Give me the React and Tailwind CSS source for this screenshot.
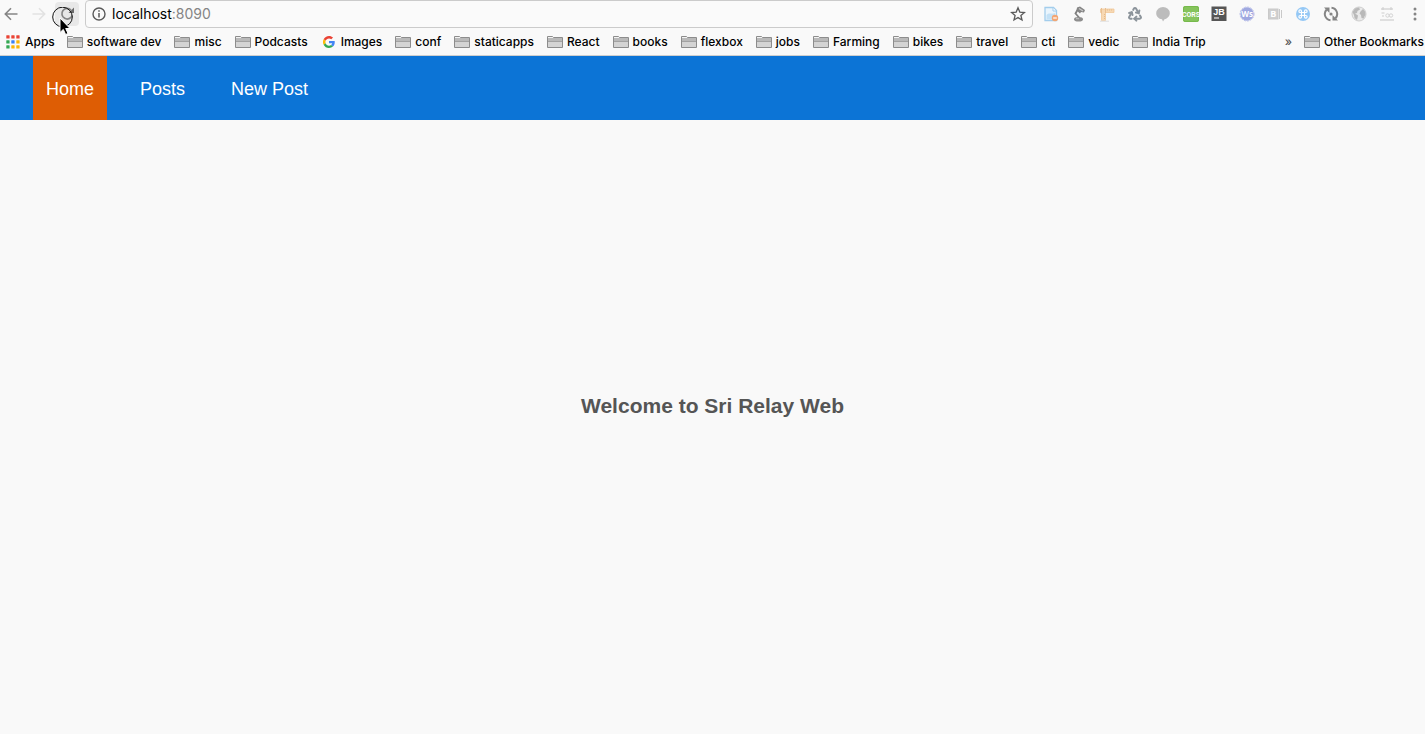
import React from "react";
import { Recycle } from "lucide-react";

const bookmarks = [
  "software dev", "misc", "Podcasts", "Images", "conf", "staticapps", "React", "books",
  "flexbox", "jobs", "Farming", "bikes", "travel", "cti", "vedic", "India Trip",
];

function Folder() {
  return (
    <svg width="16" height="14" viewBox="0 0 16 14" className="shrink-0" aria-hidden="true">
      <path d="M.5 12.500V1.500H5.500L6.500 2.500h9v10z" fill="#d4d4d4" stroke="#8c8c8c" />
      <path d="M1 3h14v3H1z" fill="#b9b9b9" />
      <path d="M1 2.500h5" stroke="#f2f2f2" />
      <path d="M1 6.500h14" stroke="#a2a2a2" />
    </svg>
  );
}

function GoogleG() {
  return (
    <svg width="12" height="12" viewBox="0 0 48 48" className="mx-0.5 shrink-0" aria-hidden="true">
      <path fill="#ea4335" d="M24 9.500c3.500 0 6.700 1.200 9.200 3.600l6.900-6.900C35.900 2.400 30.500 0 24 0 14.600 0 6.500 5.400 2.600 13.200l8 6.200C12.400 13.700 17.700 9.500 24 9.500z" />
      <path fill="#4285f4" d="M47 24.600c0-1.600-.2-3.100-.4-4.600H24v9h12.900c-.6 3-2.200 5.500-4.700 7.200l7.700 6C44.400 38 47 31.800 47 24.600z" />
      <path fill="#fbbc05" d="M10.500 28.600a14.500 14.500 0 0 1 0-9.200l-8-6.200a24 24 0 0 0 0 21.600z" />
      <path fill="#34a853" d="M24 48c6.500 0 11.900-2.100 15.900-5.800l-7.700-6c-2.200 1.500-4.900 2.300-8.200 2.300-6.300 0-11.600-4.200-13.500-9.900l-8 6.200C6.500 42.600 14.600 48 24 48z" />
    </svg>
  );
}

function AppsIcon() {
  const colors = ["#ea4335", "#ea4335", "#ea4335", "#34a853", "#3b82f4", "#fbb505", "#34a853", "#fbb505", "#fbb505"];
  return (
    <svg width="14" height="14" viewBox="0 0 14 14" aria-hidden="true">
      {colors.map((c, i) => (
        <rect key={i} x={(i % 3) * 5 + 0.3} y={Math.floor(i / 3) * 5 + 0.3} width="3.300" height="3.300" rx=".4" fill={c} />
      ))}
    </svg>
  );
}

const extensions = [
  ["Page blocker", (
    <>
      <path d="M2 1.500h8.500l3 3v10H2z" fill="#eaf5fd" stroke="#a3cdec" strokeWidth="1.300" />
      <path d="M3.500 9c3-3 5 0 8.500-2v6.500H3.500z" fill="#c3e1f6" />
      <path d="M10 2v3h3" fill="#fff" stroke="#a3cdec" />
      <circle cx="12" cy="12" r="3.200" fill="#f3a673" />
      <path d="M10.200 12h3.600" stroke="#fff" strokeWidth="1.200" />
    </>
  )],
  ["Lamp", (
    <>
      <path d="M6 1.500L9 .5l5 3.500-1 2.500-3-.5-1 1.500-3.500-3z" fill="#858585" />
      <path d="M8 2.500l4 2.500" stroke="#c9c9c9" strokeWidth="1.300" />
      <path d="M6.500 4L4.500 7.500 8.500 12" fill="none" stroke="#808080" strokeWidth="1.800" />
      <ellipse cx="7.500" cy="13.200" rx="4.500" ry="2.300" fill="#8e8e8e" />
      <path d="M5 12.700h3" stroke="#c4c4c4" />
    </>
  )],
  ["Ruler", (
    <>
      <path d="M1.500 3h13.500v3.500H6.500v8h-4v-8h-1z" fill="#f7d8b3" stroke="#f0c899" strokeWidth=".8" />
      <path d="M8 4h6M5.500 8v5" stroke="#e5bb8b" strokeDasharray="1 1" />
      <path d="M2.500 2v5.500M6.500 2v5" stroke="#e8bf91" />
      <path d="M1 15.200h9" stroke="#dedede" />
    </>
  )],
  ["Recycle", <Recycle size={16} color="#8c949b" strokeWidth={3} />],
  ["Comment", <path d="M8 1a6.800 6.200 0 0 1 6.800 6.200c0 3-2.400 5.300-5.300 6L8 15.500l-1-2.200C3.700 12.800 1.200 10.500 1.200 7.200A6.800 6.200 0 0 1 8 1z" fill="#bcbcbc" />],
  ["CORS", (
    <>
      <rect width="16" height="16" rx="2" fill="#86c45c" />
      <rect x=".5" y=".5" width="15" height="15" rx="2" fill="none" stroke="#76b94c" />
      <text x="8" y="10.500" textAnchor="middle" fontSize="7" fontWeight="700" fill="#fff" fontFamily="Liberation Sans Narrow, Roboto, sans-serif">CORS</text>
    </>
  )],
  ["JetBrains", (
    <>
      <rect x=".5" y=".5" width="15" height="14.500" fill="#565656" />
      <text x="8" y="9" textAnchor="middle" fontSize="9" fontWeight="700" fill="#fff" fontFamily="Liberation Sans, sans-serif">JB</text>
      <path d="M3 12h5" stroke="#ddd" strokeWidth="1.300" />
    </>
  )],
  ["WebSocket", (
    <>
      <circle cx="8" cy="8" r="6.700" fill="#9fa8e0" />
      <circle cx="8" cy="8" r="7" fill="none" stroke="#b9bfe9" strokeDasharray="2 1" />
      <text x="8" y="11" textAnchor="middle" fontSize="8" fontWeight="700" fill="#fff">Ws</text>
    </>
  )],
  ["Blocks", (
    <>
      <rect x="1.500" y="3" width="9.500" height="10" fill="#cfcfcf" stroke="#c9c9c9" />
      <text x="6.300" y="11.200" textAnchor="middle" fontSize="9" fontWeight="700" fill="#fff">B</text>
      <path d="M12.500 3v10M14.500 4v8" stroke="#c9c9c9" />
    </>
  )],
  ["Command", (
    <>
      <circle cx="8" cy="8" r="7" fill="#95c8f5" />
      <path d="M6.500 6.500V5.200a1.300 1.300 0 1 0-1.300 1.300h5.600a1.300 1.300 0 1 0-1.300-1.300v5.600a1.300 1.300 0 1 0 1.300-1.300H5.200a1.300 1.300 0 1 0 1.300 1.300z" fill="none" stroke="#fff" strokeWidth="1.200" />
    </>
  )],
  ["Refresh rule", (
    <>
      <path d="M7.500 14.200A6.200 6.200 0 0 1 3.500 3.800M8.500 1.800A6.200 6.200 0 0 1 12.500 12.200" fill="none" stroke="#858585" strokeWidth="2" />
      <path d="M1 1.500h5.500V7zM15 14.500H9.500V9z" fill="#858585" />
      <circle cx="8" cy="8" r="1.600" fill="#858585" />
    </>
  )],
  ["Globe", (
    <>
      <circle cx="8" cy="8" r="7" fill="#e9e9e9" stroke="#cdcdcd" />
      <path d="M1.500 6L4 2.500 8 1.500l1 2-2.500 1.500L6 7 4 7.500l3 2L6.500 12 6 14 3.500 12 3 9zM9.500 5.500L12 3l2 2.500.5 3-2 4-2-.5L10 9 8.500 7.500z" fill="#b9b9b9" />
    </>
  )],
  ["Schedule", (
    <>
      <path d="M2 3h12M1 14h14" stroke="#d6d6d6" strokeWidth="1.500" />
      <path d="M4 1v3M12 1v3M2.500 7h3M3 10h2" stroke="#cdcdcd" />
      <circle cx="8.500" cy="9.500" r="1.700" fill="none" stroke="#d3d3d3" />
      <circle cx="12" cy="9.500" r="1.700" fill="none" stroke="#d3d3d3" />
    </>
  )],
];

export default function App() {
  return (
    <div className="flex min-h-screen flex-col overflow-x-hidden bg-[#f9f9f9]">
      <header className="border-b border-[#cfcfcf] font-['Inter',sans-serif] text-black">
        <div className="flex h-7 items-center">
          <div className="relative flex items-center pl-1">
            <button aria-label="Back" className="mr-3.5">
              <svg width="14" height="14" viewBox="0 0 14 14" fill="none" stroke="#858585" strokeWidth="1.600" className="block">
                <path d="M13.500 7H1.500M7 1.300L1.300 7 7 12.700" />
              </svg>
            </button>
            <button aria-label="Forward" className="mr-[9px]">
              <svg width="14" height="14" viewBox="0 0 14 14" fill="none" stroke="#e2e2e2" strokeWidth="1.600" className="block">
                <path d="M.5 7h12M7 1.300L12.700 7 7 12.700" />
              </svg>
            </button>
            <button aria-label="Reload" className="flex size-6 items-center justify-center rounded-sm bg-[#e8e8e8]">
              <svg width="16" height="16" viewBox="0 0 16 16" fill="none">
                <path d="M12 4A5.300 5.300 0 1 0 13.200 9.500" stroke="#858585" strokeWidth="1.700" />
                <path d="M15 1.500V7H9.500z" fill="#6a6a6a" />
              </svg>
            </button>
            <svg width="24" height="30" viewBox="0 0 24 30" className="pointer-events-none absolute left-[51px] top-[5px]" aria-hidden="true">
              <circle cx="11.500" cy="10" r="9.800" fill="none" stroke="#111" strokeWidth="1" />
              <path d="M9 11v14.500l3.300-3.100 2.300 5.100 2.400-1-2.300-5H19z" fill="#000" stroke="#fff" strokeWidth="1" />
            </svg>
          </div>
          <div className="ml-1.5 flex h-7 min-w-0 flex-1 items-center rounded border border-[#cbcbcb] bg-[#fafafa] px-1.5">
            <svg width="14" height="14" viewBox="0 0 14 14" className="mr-1.5 shrink-0" aria-hidden="true">
              <circle cx="7" cy="7" r="6" fill="none" stroke="#5a5a5a" strokeWidth="1.400" />
              <path d="M7 6v4.500M7 3.300v1.500" stroke="#5a5a5a" strokeWidth="1.500" />
            </svg>
            <div className="flex-1 text-sm leading-5">localhost<span className="text-[#858585]">:8090</span></div>
            <button aria-label="Bookmark this page">
              <svg width="16" height="16" viewBox="0 0 16 16" className="block">
                <path d="M8 1.800l1.800 4.300 4.600.4-3.500 3 1.100 4.500L8 11.600 4 14l1.100-4.500-3.500-3 4.600-.4z" fill="none" stroke="#5a5a5a" strokeWidth="1.300" />
              </svg>
            </button>
          </div>
          <div className="ml-1 flex items-center">
            {extensions.map(([name, art]) => (
              <button key={name} aria-label={name} className="flex w-7 justify-center">
                <svg width="16" height="16" viewBox="0 0 16 16" fontFamily="Open Sans, sans-serif">{art}</svg>
              </button>
            ))}
            <button aria-label="Menu" className="flex w-6 justify-center pl-1">
              <svg width="4" height="14" viewBox="0 0 4 14" fill="#858585">
                <circle cx="2" cy="2" r="1.500" /><circle cx="2" cy="7" r="1.500" /><circle cx="2" cy="12" r="1.500" />
              </svg>
            </button>
          </div>
        </div>
        <nav aria-label="Bookmarks" className="flex h-[27px] items-center whitespace-nowrap pl-1.5 pr-px text-[12px] font-medium leading-4">
          <a href="#apps" className="mr-3 flex items-center gap-[5px]"><AppsIcon />Apps</a>
          <div className="flex flex-1 gap-[13px]">
            {bookmarks.map((name) => (
              <a key={name} href="#bookmark" className="flex items-center gap-1">
                {name === "Images" ? <GoogleG /> : <Folder />}
                {name}
              </a>
            ))}
          </div>
          <button aria-label="More bookmarks" className="mr-3 text-[#555]">»</button>
          <a href="#other" className="flex items-center gap-1"><Folder />Other Bookmarks</a>
        </nav>
      </header>
      <nav aria-label="Main" className="flex h-16 gap-5 bg-[#0c74d6] px-[33px] font-['Liberation_Sans',Arial,sans-serif] text-lg text-white">
        <a href="#home" aria-current="page" className="flex items-center bg-[#de5d04] px-[13px] pt-0.5">Home</a>
        <a href="#posts" className="flex items-center px-[13px] pt-0.5">Posts</a>
        <a href="#new" className="flex items-center px-[13px] pt-0.5">New Post</a>
      </nav>
      <main className="flex flex-1 items-center justify-center pb-[42px]">
        <h1 className="font-['Liberation_Sans',Arial,sans-serif] text-[21px] font-bold leading-7 text-[#555]">Welcome to Sri Relay Web</h1>
      </main>
    </div>
  );
}
